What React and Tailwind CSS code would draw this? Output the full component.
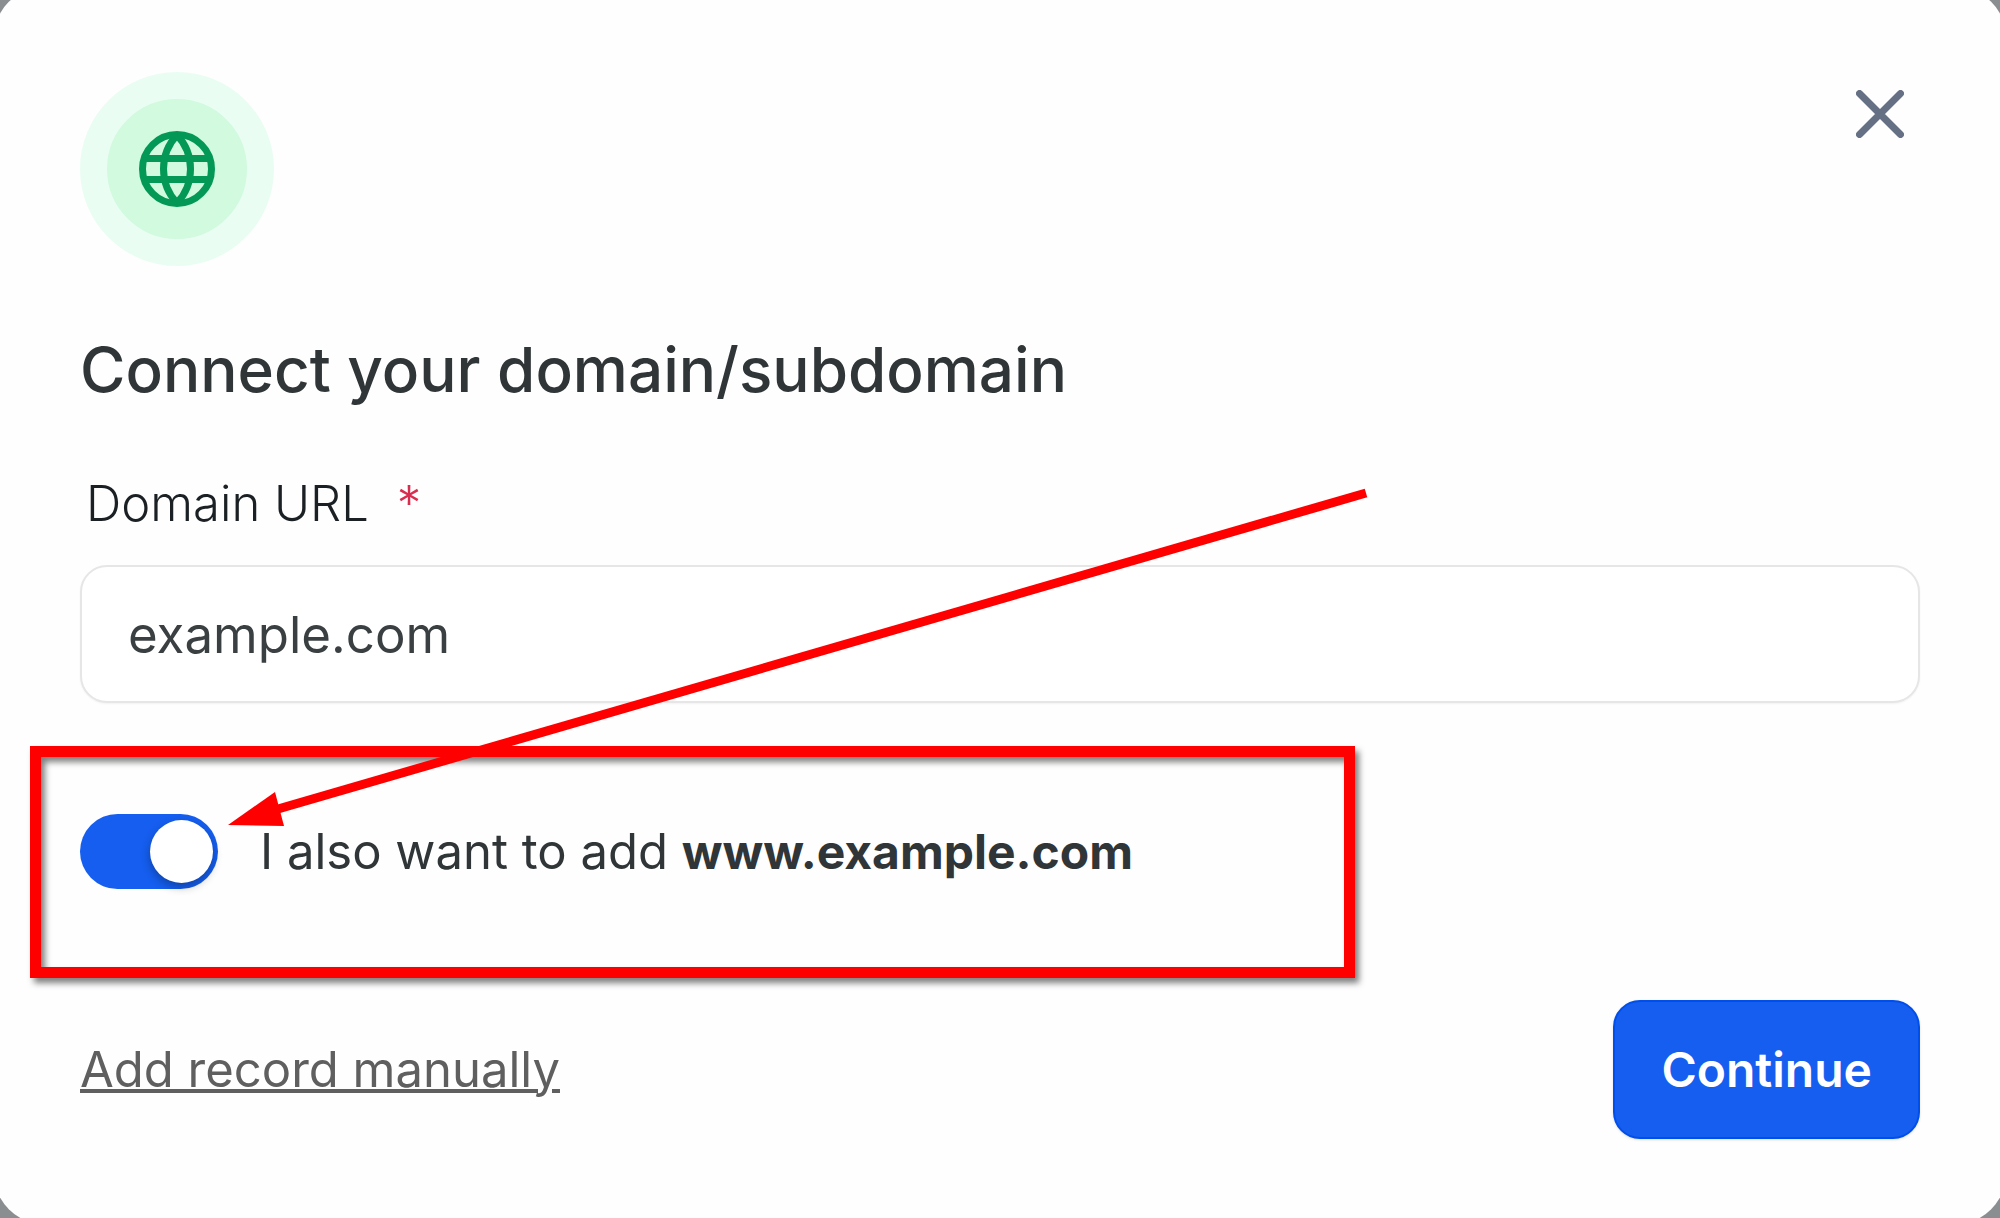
import React, { useState } from 'react';

const GlobeIcon = () => (
  <svg className="w-[76px] h-[76px]" viewBox="0 0 76 76" fill="none" stroke="currentColor" strokeWidth="7" aria-hidden="true">
    <circle cx="38" cy="38" r="34.5" />
    <path d="M6 27.5H70M6 48.5H70" />
    <path d="M38 4C29 13.5 24.5 25.5 24.5 38S29 62.5 38 72" />
    <path d="M38 4C47 13.5 51.5 25.5 51.5 38S47 62.5 38 72" />
  </svg>
);

const CloseIcon = () => (
  <svg className="w-12 h-12" viewBox="0 0 48 48" fill="none" stroke="currentColor" strokeWidth="7" strokeLinecap="round" aria-hidden="true">
    <path d="M3.5 3.5L44.5 44.5M44.5 3.5L3.5 44.5" />
  </svg>
);

// Highlight frame and arrow drawn over the dialog
const Callout = () => (
  <>
    <div className="absolute -left-[50px] -top-[68px] w-[1325px] h-[232px] border-[11px] border-[#ff0000] drop-shadow-[4px_5px_3px_rgba(0,0,0,0.5)] pointer-events-none" />
    <svg
      className="absolute left-[148px] -top-[326px] w-[1142px] h-[340px] text-[#ff0000] pointer-events-none"
      viewBox="0 0 1142 340"
      aria-hidden="true"
    >
      <path d="M50 321L1138 5" stroke="currentColor" strokeWidth="9" />
      <path d="M0 337L47 304L56 338Z" fill="currentColor" />
    </svg>
  </>
);

const Toggle = ({ id, checked, onChange }) => (
  <span className="relative flex w-[138px] h-[75px] shrink-0">
    <input
      id={id}
      type="checkbox"
      role="switch"
      checked={checked}
      onChange={onChange}
      className="peer appearance-none w-full h-full rounded-full bg-gray-300 checked:bg-[#155eef] cursor-pointer"
    />
    <span className="absolute top-[6px] left-[6px] peer-checked:left-[70px] w-[63px] h-[63px] rounded-full bg-white shadow-[0_4px_10px_rgba(0,0,0,0.3)] pointer-events-none" />
  </span>
);

function App() {
  const [domain, setDomain] = useState('example.com');
  const [addWww, setAddWww] = useState(true);

  return (
    <div className="flex min-h-screen overflow-hidden bg-[#8b8e90] font-['Inter',sans-serif]">
      <main
        role="dialog"
        aria-labelledby="dialog-title"
        className="flex-1 -mx-[7px] -mt-[14px] -mb-[7px] px-[87px] pt-[86px] pb-[86px] rounded-[54px] bg-[#fefefe]"
      >
        <div className="flex items-start justify-between">
          <div className="flex items-center justify-center w-[194px] h-[194px] rounded-full border-[27px] border-[#eafdf3] bg-[#d1fadf] text-[#039855]">
            <GlobeIcon />
          </div>
          <button type="button" aria-label="Close" className="px-4 py-[18px] text-[#667085] cursor-pointer">
            <CloseIcon />
          </button>
        </div>

        <h1 id="dialog-title" className="mt-16 text-[62px] leading-[80px] font-medium text-[#303538]">
          Connect your domain/subdomain
        </h1>

        <form onSubmit={(e) => e.preventDefault()}>
          <label htmlFor="domain" className="flex gap-7 mt-[62px] pl-[6px] text-[49px] leading-[64px] font-light text-[#1b2024]">
            Domain URL
            <span className="text-[#d92d50]">*</span>
          </label>
          <input
            id="domain"
            type="text"
            required
            value={domain}
            onChange={(e) => setDomain(e.target.value)}
            className="w-full h-[138px] mt-[29px] px-[46px] rounded-[27px] border-2 border-[#e6e6e6] bg-white shadow-xs text-[51px] text-[#3a3f42] outline-none"
          />

          <div className="relative flex items-center gap-[42px] mt-[111px]">
            <Toggle id="add-www" checked={addWww} onChange={(e) => setAddWww(e.target.checked)} />
            <label htmlFor="add-www" className="text-[49px] leading-[64px] text-[#303538]">
              I also want to add <strong className="text-[48px] font-bold">www.{domain}</strong>
            </label>
            <Callout />
          </div>

          <div className="flex items-center justify-between mt-[111px]">
            <a href="#" className="text-[49px] leading-[64px] text-[#5f5f5f] underline decoration-4">
              Add record manually
            </a>
            <button
              type="submit"
              className="h-[139px] px-[46px] rounded-[27px] border-2 border-[#004eeb] bg-[#155eef] shadow-sm text-[48px] leading-[64px] font-semibold text-white cursor-pointer"
            >
              Continue
            </button>
          </div>
        </form>
      </main>
    </div>
  );
}

export default App;
